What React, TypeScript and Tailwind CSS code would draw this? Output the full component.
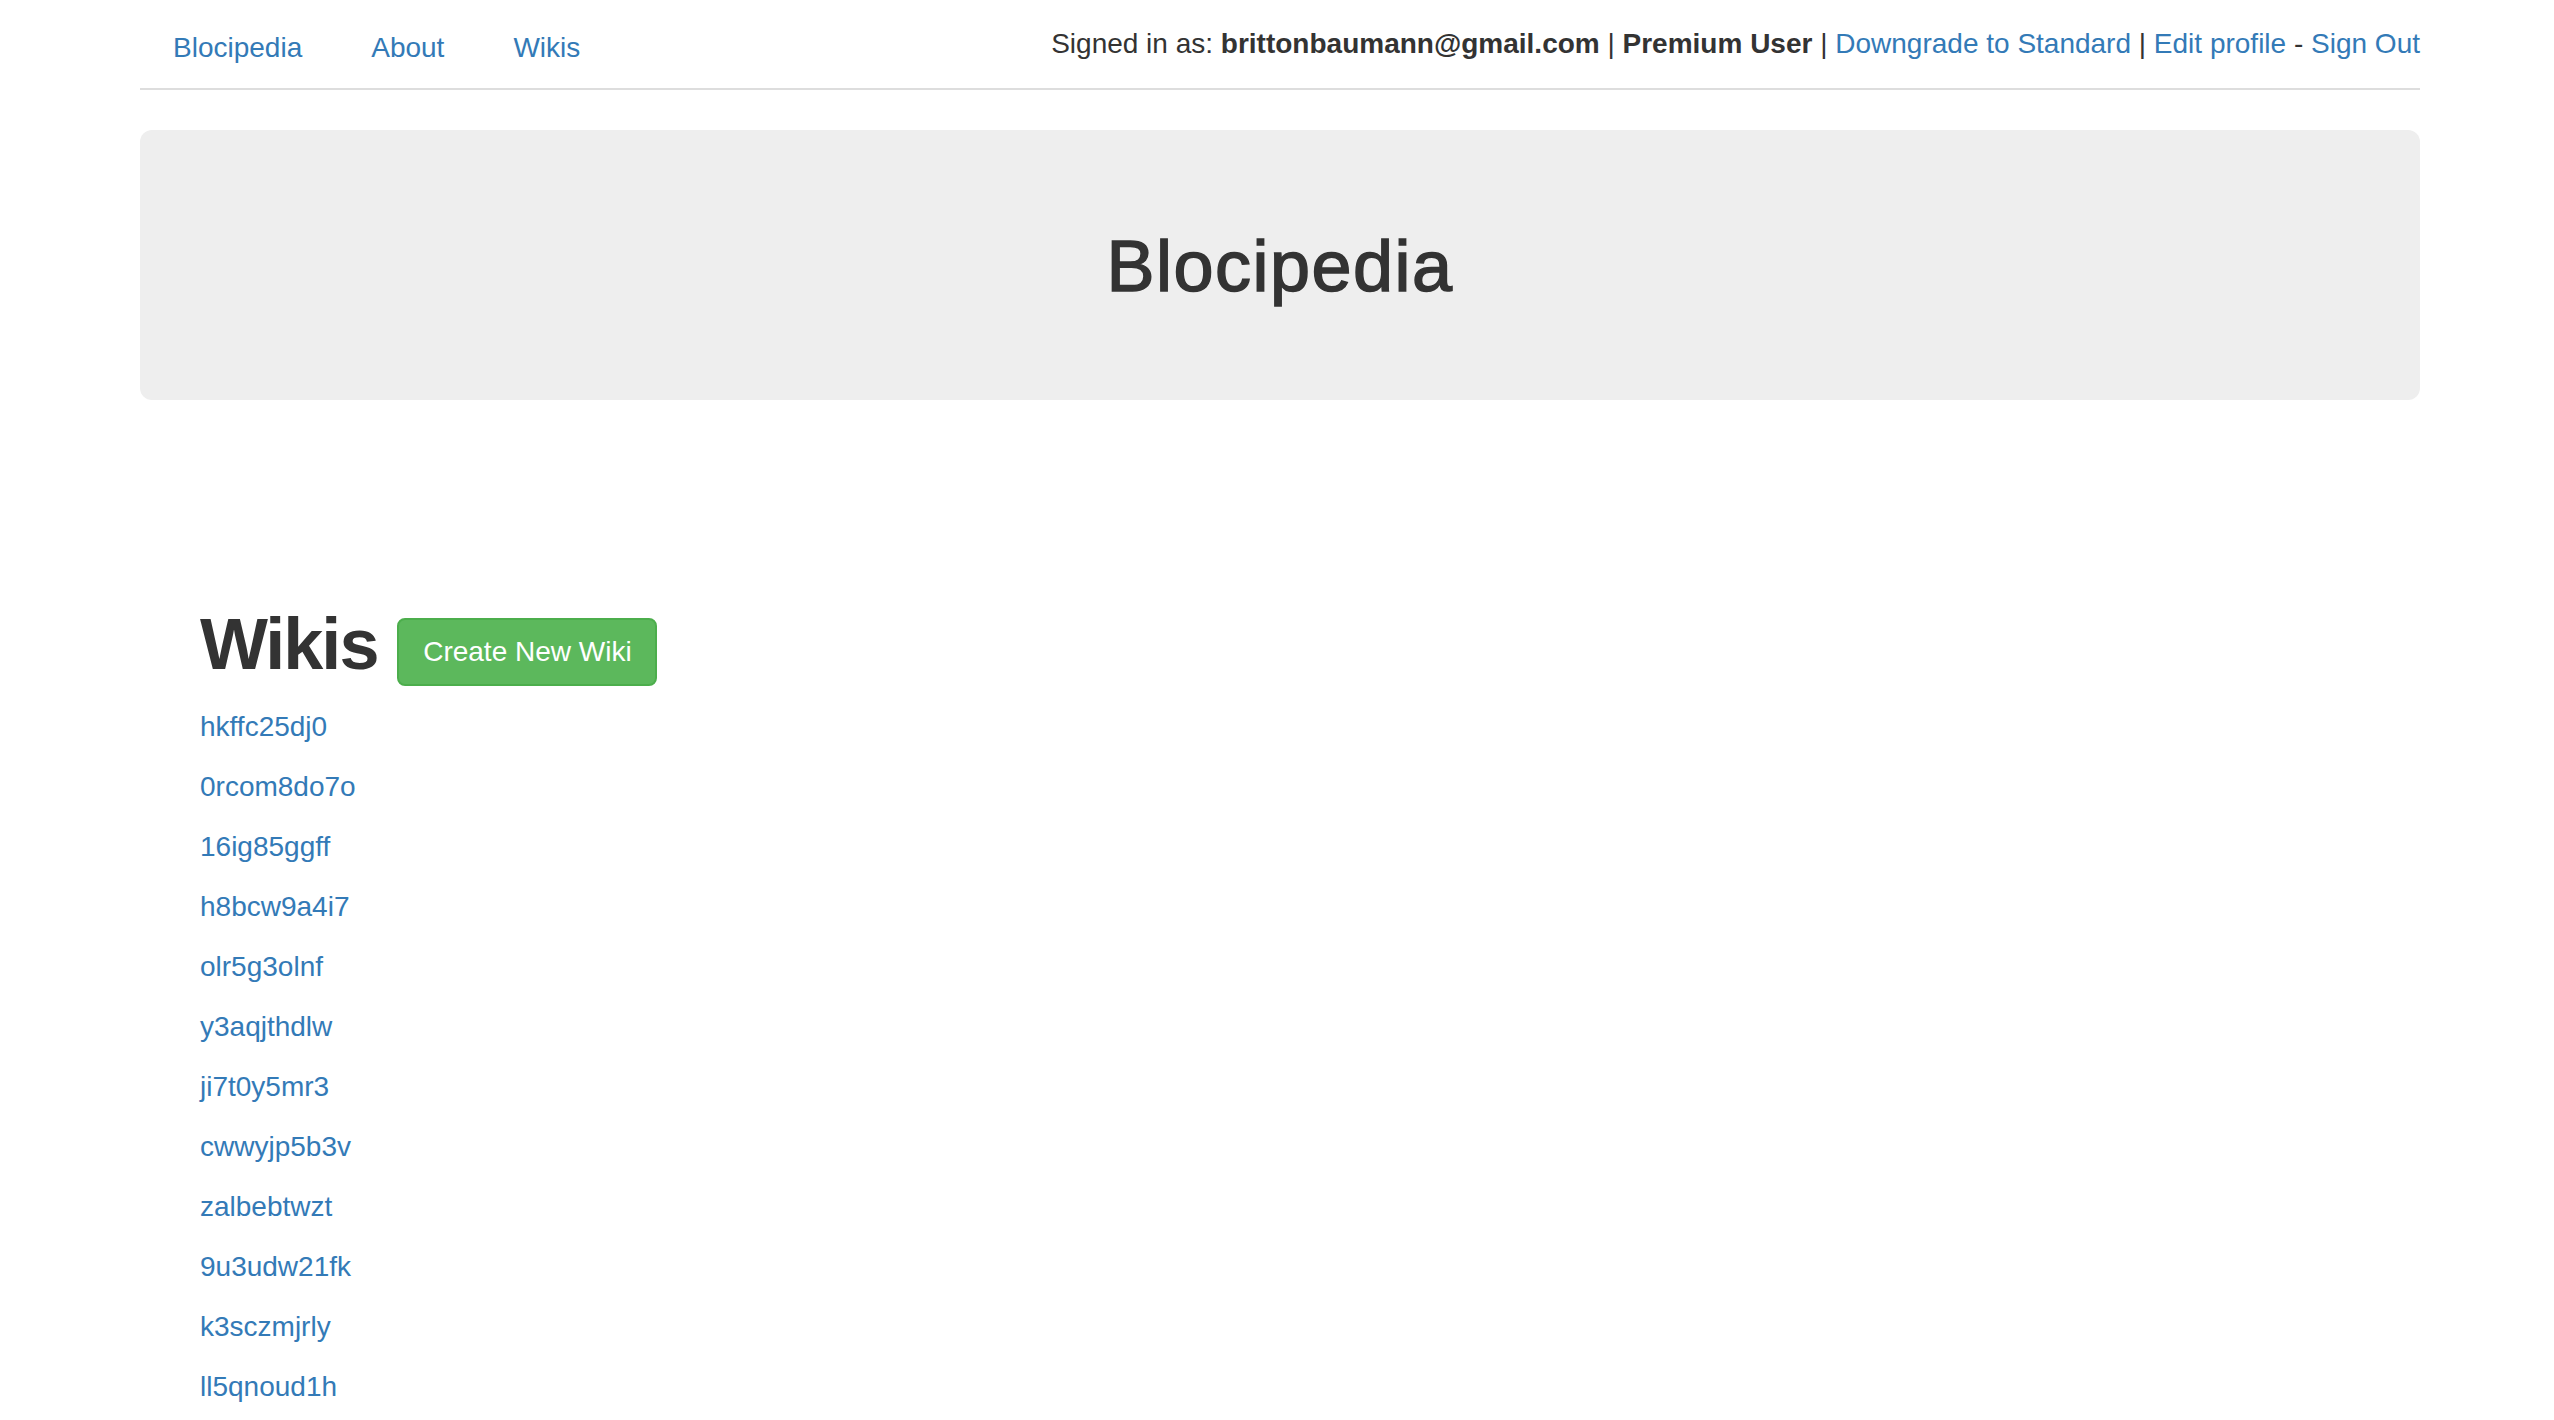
import React from "react";

const wikis = [
  "hkffc25dj0",
  "0rcom8do7o",
  "16ig85ggff",
  "h8bcw9a4i7",
  "olr5g3olnf",
  "y3aqjthdlw",
  "ji7t0y5mr3",
  "cwwyjp5b3v",
  "zalbebtwzt",
  "9u3udw21fk",
  "k3sczmjrly",
  "ll5qnoud1h",
];

export default function App() {
  return (
    <div
      className="min-h-screen bg-white text-[#333333]"
      style={{ fontFamily: '"Liberation Sans", Arial, Helvetica, sans-serif' }}
    >
      <div className="ml-[140px] w-[2280px]">
        {/* Nav */}
        <nav className="flex h-[90px] items-start justify-between border-b-2 border-[#dddddd]">
          <div className="flex pt-[28px] pl-[33px] text-[28px] leading-[40px]">
            <a href="#" className="text-[#337ab7]">Blocipedia</a>
            <a href="#" className="ml-[69px] text-[#337ab7]">About</a>
            <a href="#" className="ml-[69px] text-[#337ab7]">Wikis</a>
          </div>
          <div className="whitespace-nowrap pt-[24px] text-[28px] leading-[40px]">
            Signed in as: <b className="font-bold">brittonbaumann@gmail.com</b> |{" "}
            <b className="font-bold">Premium User</b> |{" "}
            <a href="#" className="text-[#337ab7]">Downgrade to Standard</a> |{" "}
            <a href="#" className="text-[#337ab7]">Edit profile</a> -{" "}
            <a href="#" className="text-[#337ab7]">Sign Out</a>
          </div>
        </nav>

        {/* Jumbotron */}
        <div className="mt-[40px] h-[270px] rounded-[12px] bg-[#eeeeee] pt-[97px]">
          <h1 className="text-center text-[72px] font-normal leading-[79px] tracking-[1.5px] text-[#333333] [-webkit-text-stroke:1.5px_#333333]">
            Blocipedia
          </h1>
        </div>

        {/* Wikis */}
        <div className="mt-[205px] pl-[60px]">
          <div className="flex items-start">
            <h1 className="text-[72px] font-bold leading-[79px] tracking-[-2px] text-[#333333]">Wikis</h1>
            <button className="ml-[20px] mt-[13px] h-[68px] w-[260px] rounded-[8px] border-2 border-[#4cae4c] bg-[#5cb85c] text-[28px] leading-[40px] text-white">
              Create New Wiki
            </button>
          </div>
          <div className="mt-[21px] flex flex-col">
            {wikis.map((w) => (
              <div key={w} className="h-[60px]">
                <a href="#" className="text-[28px] leading-[40px] text-[#337ab7]">
                  {w}
                </a>
              </div>
            ))}
          </div>
        </div>
      </div>
    </div>
  );
}
